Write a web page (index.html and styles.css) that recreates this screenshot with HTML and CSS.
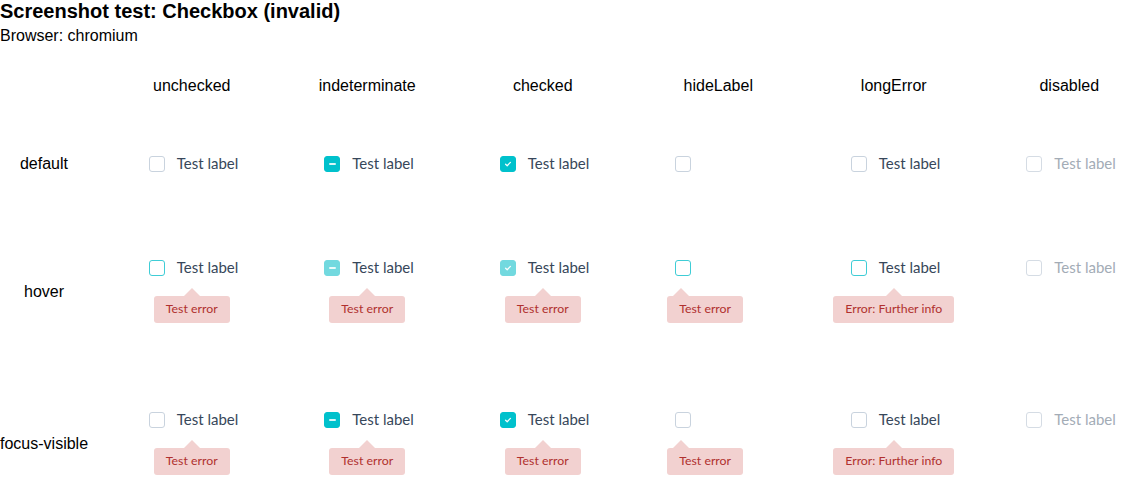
FILE: index.html
```html
<!DOCTYPE html>
<html lang="en">
<head>
<meta charset="utf-8">
<title>Screenshot test: Checkbox (invalid)</title>
<link rel="stylesheet" href="styles.css">
</head>
<body>
<h1 class="title">Screenshot test: Checkbox (invalid)</h1>
<p class="browser">Browser: chromium</p>

<div class="row row--head">
  <div class="row-head"></div>
  <div class="col-head">unchecked</div>
  <div class="col-head">indeterminate</div>
  <div class="col-head">checked</div>
  <div class="col-head">hideLabel</div>
  <div class="col-head">longError</div>
  <div class="col-head">disabled</div>
</div>

<div class="rows">
  <div class="row">
    <div class="row-head">default</div>
    <div class="cell"><div class="field"><label class="cb-row"><span class="box"></span><span class="label">Test label</span></label></div></div>
    <div class="cell"><div class="field"><label class="cb-row"><span class="box box--on"><span class="dash"></span></span><span class="label">Test label</span></label></div></div>
    <div class="cell"><div class="field"><label class="cb-row"><span class="box box--on"><svg class="tick" viewBox="0 0 16 16"><path d="M5.6 8.2 7.2 9.7 10.4 6.4"/></svg></span><span class="label">Test label</span></label></div></div>
    <div class="cell"><div class="field"><label class="cb-row"><span class="box"></span><span class="label label--hidden">Test label</span></label></div></div>
    <div class="cell"><div class="field"><label class="cb-row"><span class="box"></span><span class="label">Test label</span></label></div></div>
    <div class="cell"><div class="field"><label class="cb-row"><span class="box box--disabled"></span><span class="label label--disabled">Test label</span></label></div></div>
  </div>

  <div class="row">
    <div class="row-head">hover</div>
    <div class="cell"><div class="field"><label class="cb-row"><span class="box box--hover"></span><span class="label">Test label</span></label><div class="tip">Test error</div></div></div>
    <div class="cell"><div class="field"><label class="cb-row"><span class="box box--on-hover"><span class="dash"></span></span><span class="label">Test label</span></label><div class="tip">Test error</div></div></div>
    <div class="cell"><div class="field"><label class="cb-row"><span class="box box--on-hover"><svg class="tick" viewBox="0 0 16 16"><path d="M5.6 8.2 7.2 9.7 10.4 6.4"/></svg></span><span class="label">Test label</span></label><div class="tip">Test error</div></div></div>
    <div class="cell"><div class="field"><label class="cb-row"><span class="box box--hover"></span><span class="label label--hidden">Test label</span></label><div class="tip tip--start">Test error</div></div></div>
    <div class="cell"><div class="field"><label class="cb-row"><span class="box box--hover"></span><span class="label">Test label</span></label><div class="tip">Error: Further info</div></div></div>
    <div class="cell"><div class="field"><label class="cb-row"><span class="box box--disabled"></span><span class="label label--disabled">Test label</span></label></div></div>
  </div>

  <div class="row">
    <div class="row-head">focus-visible</div>
    <div class="cell"><div class="field"><label class="cb-row"><span class="box"></span><span class="label">Test label</span></label><div class="tip">Test error</div></div></div>
    <div class="cell"><div class="field"><label class="cb-row"><span class="box box--on"><span class="dash"></span></span><span class="label">Test label</span></label><div class="tip">Test error</div></div></div>
    <div class="cell"><div class="field"><label class="cb-row"><span class="box box--on"><svg class="tick" viewBox="0 0 16 16"><path d="M5.6 8.2 7.2 9.7 10.4 6.4"/></svg></span><span class="label">Test label</span></label><div class="tip">Test error</div></div></div>
    <div class="cell"><div class="field"><label class="cb-row"><span class="box"></span><span class="label label--hidden">Test label</span></label><div class="tip tip--start">Test error</div></div></div>
    <div class="cell"><div class="field"><label class="cb-row"><span class="box"></span><span class="label">Test label</span></label><div class="tip">Error: Further info</div></div></div>
    <div class="cell"><div class="field"><label class="cb-row"><span class="box box--disabled"></span><span class="label label--disabled">Test label</span></label></div></div>
  </div>
</div>
</body>
</html>
```

FILE: styles.css
```css
html, body {
  margin: 0;
  padding: 0;
  background: #ffffff;
}

body {
  font-family: "Liberation Sans", Arial, sans-serif;
  color: #000000;
}

.title {
  margin: 0;
  font-size: 20px;
  font-weight: bold;
  line-height: 23px;
}

.browser {
  margin: 4px 0 0;
  font-size: 16px;
  line-height: 18px;
}

.row {
  display: grid;
  grid-template-columns: 88px repeat(6, 1fr);
  column-gap: 32px;
  align-items: start;
}

.row--head {
  margin-top: 32px;
}

.rows {
  display: flex;
  flex-direction: column;
  gap: 86px;
  margin-top: 60px;
}

.col-head {
  text-align: center;
  font-size: 16px;
  line-height: 18px;
}

.row-head {
  align-self: center;
  text-align: center;
  font-size: 16px;
  line-height: 18px;
  white-space: nowrap;
}

.cell {
  display: flex;
  justify-content: center;
}

.field {
  display: flex;
  flex-direction: column;
  align-items: center;
  width: 86px;
}

.cb-row {
  display: flex;
  align-items: center;
  gap: 12px;
  width: 86px;
  height: 18px;
  flex: none;
}

.box {
  box-sizing: border-box;
  width: 16px;
  height: 16px;
  flex: none;
  border: 1px solid #c9d3de;
  border-radius: 3px;
  background: #ffffff;
  display: flex;
  align-items: center;
  justify-content: center;
}

.box--hover {
  border-color: #3fcdd6;
}

.box--on {
  border-color: #00c1cc;
  background: #00c1cc;
}

.box--on-hover {
  border-color: #72d9df;
  background: #72d9df;
}

.box--disabled {
  border-color: #d5dce4;
}

.dash {
  width: 7px;
  height: 2px;
  border-radius: 1px;
  background: rgba(255, 255, 255, 0.85);
}

.tick {
  width: 16px;
  height: 16px;
  flex: none;
  fill: none;
  stroke: rgba(255, 255, 255, 0.95);
  stroke-width: 1.3;
  stroke-linecap: round;
  stroke-linejoin: round;
}

.label {
  margin-top: -2px;
  font-family: Lato, "Noto Sans", sans-serif;
  font-size: 15px;
  line-height: 18px;
  color: #37475a;
  white-space: nowrap;
}

.label--hidden {
  visibility: hidden;
}

.label--disabled {
  color: #a3acb6;
}

.tip {
  position: relative;
  flex: none;
  margin: 19px 0 2px;
  padding: 0 12px;
  height: 27px;
  line-height: 26px;
  background: #f2d1d0;
  color: #b0302e;
  border-radius: 3px;
  font-family: Lato, "Noto Sans", sans-serif;
  font-size: 12.3px;
  white-space: nowrap;
}

.tip::before {
  content: "";
  position: absolute;
  top: -8px;
  left: 50%;
  margin-left: -8px;
  border-left: 8px solid transparent;
  border-right: 8px solid transparent;
  border-bottom: 8px solid #f2d1d0;
}

.tip--start {
  align-self: flex-start;
  margin-left: -8px;
}

.tip--start::before {
  left: 14px;
}
```
